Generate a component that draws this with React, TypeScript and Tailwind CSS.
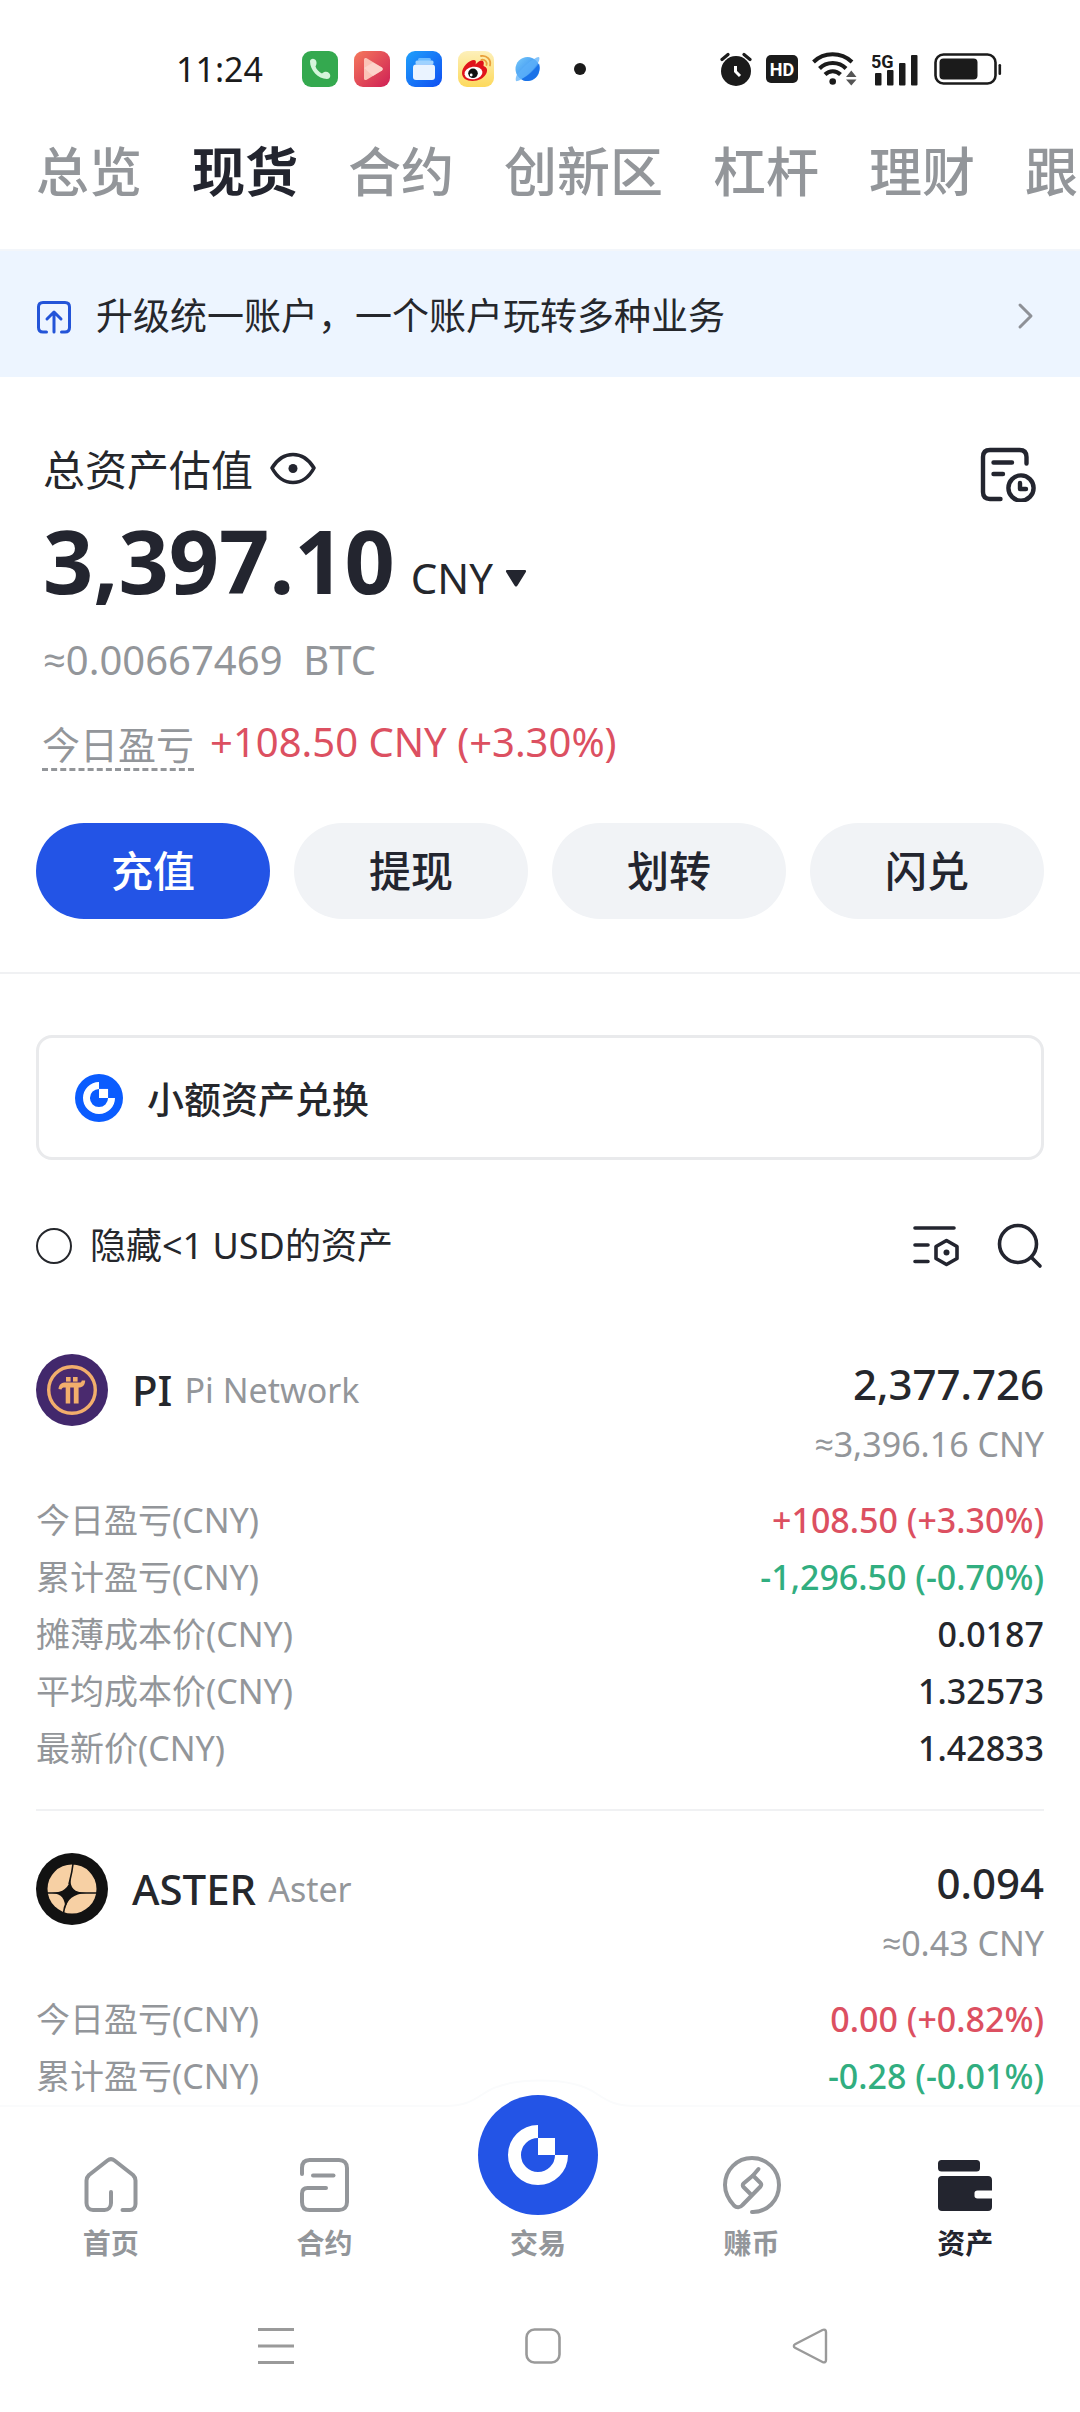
import { useState } from "react";
import type { ReactNode } from "react";
import clsx from "clsx";

const tabs = ["总览", "现货", "合约", "创新区", "杠杆", "理财", "跟单"];
const actions = ["充值", "提现", "划转", "闪兑"];

type Tone = "up" | "down" | "plain";
type Row = { label: string; value: string; tone: Tone };
type Asset = {
  symbol: string;
  name: string;
  amount: string;
  approx: string;
  icon: ReactNode;
  rows: Row[];
};

const toneClass: Record<Tone, string> = {
  up: "text-[#dc5061]",
  down: "text-[#31ae80]",
  plain: "text-[#25272c]",
};

const assets: Asset[] = [
  {
    symbol: "PI",
    name: "Pi Network",
    amount: "2,377.726",
    approx: "≈3,396.16 CNY",
    icon: <PiCoin />,
    rows: [
      { label: "今日盈亏(CNY)", value: "+108.50 (+3.30%)", tone: "up" },
      { label: "累计盈亏(CNY)", value: "-1,296.50 (-0.70%)", tone: "down" },
      { label: "摊薄成本价(CNY)", value: "0.0187", tone: "plain" },
      { label: "平均成本价(CNY)", value: "1.32573", tone: "plain" },
      { label: "最新价(CNY)", value: "1.42833", tone: "plain" },
    ],
  },
  {
    symbol: "ASTER",
    name: "Aster",
    amount: "0.094",
    approx: "≈0.43 CNY",
    icon: <AsterCoin />,
    rows: [
      { label: "今日盈亏(CNY)", value: "0.00 (+0.82%)", tone: "up" },
      { label: "累计盈亏(CNY)", value: "-0.28 (-0.01%)", tone: "down" },
    ],
  },
];

/* ---------- logos ---------- */

function GateMark({ className, viewBox, fill }: { className: string; viewBox: string; fill: string }) {
  return (
    <svg className={className} viewBox={viewBox} aria-hidden="true">
      <circle cx="60" cy="60" r="60" fill={fill} />
      <path d="M60 36.5A23.5 23.5 0 1 0 83.5 60" fill="none" stroke="#fff" strokeWidth="13" />
      <rect x="60" y="43" width="17" height="17" fill="#fff" />
    </svg>
  );
}

function PiCoin() {
  return (
    <svg className="size-[72px] shrink-0" viewBox="0 0 72 72" aria-hidden="true">
      <circle cx="36" cy="36" r="36" fill="#42286c" />
      <circle cx="36" cy="36" r="23.3" fill="#4a2a6e" stroke="#f2ae6c" strokeWidth="3.4" />
      <g fill="#f2ae6c">
        <rect x="30" y="23" width="4.6" height="4.6" />
        <rect x="37" y="23" width="4.6" height="4.6" />
        <path d="M22.5 35c.6-4.600 3-6.400 7.500-6.400h13.200c1.600 0 2.300-.7 2.600-2.200h3.400c-.2 4.600-2.300 7-6.600 7v16h-4.800v-16h-3.600v16h-4.500v-16h-1.300c-1.700 0-2.500.6-2.900 2z" />
      </g>
    </svg>
  );
}

function AsterCoin() {
  return (
    <svg className="size-[72px] shrink-0" viewBox="0 0 72 72" aria-hidden="true">
      <circle cx="36" cy="36" r="36" fill="#121212" />
      <circle cx="36" cy="36" r="24.5" fill="#f7d0a4" />
      <g fill="none" stroke="#121212" strokeWidth="1.6">
        <path d="M11 40H61" />
        <path d="M37 11C36 20 34.500 25 33 31" />
        <path d="M31 48C28.500 53 27.800 56 27.500 60" />
      </g>
      <path d="M34.500 25C34 35 38 39.500 50 40C38 40.500 30.500 47 29.500 56C29 46 26 40.800 16 40C27 39.500 33 35 34.500 25Z" fill="#121212" />
    </svg>
  );
}

/* ---------- status bar ---------- */

function StatusBar() {
  return (
    <div className="flex h-[134px] shrink-0 items-center justify-between pt-1 pr-[78px] pl-[176px]">
      <div className="flex items-center">
        <span className="w-[126px] text-[34px] leading-[48px] text-[#1b1b1b]">11:24</span>
        <div className="flex items-center gap-4">
          <svg className="size-9" viewBox="0 0 36 36" aria-hidden="true">
            <rect width="36" height="36" rx="9" fill="#34a94f" />
            <path d="M8 10.500C8 8 11 7 13 8.500C15.500 10.500 14.500 14 13.500 15.500C14.500 18.500 17 21 20 22.500C22 20.500 25 20 27 22C29.500 24.500 28 28 25 28C16 28 8 19 8 10.500Z" fill="#d4f5db" />
          </svg>
          <svg className="size-9" viewBox="0 0 36 36" aria-hidden="true">
            <defs>
              <linearGradient id="video" x1="0" y1="0" x2="1" y2="1">
                <stop offset="0" stopColor="#f5795c" />
                <stop offset="1" stopColor="#cf1f55" />
              </linearGradient>
            </defs>
            <rect width="36" height="36" rx="9" fill="url(#video)" />
            <path d="M10 8.500C10 7 11.500 6.500 12.700 7.200L28 16.500C29 17.200 29 18.700 28 19.400L12.700 28.800C11.500 29.500 10 29 10 27.500Z" fill="#fbc3b7" />
            <path d="M10 17L19 11.500L28 16.500C29 17.200 29 18.700 28 19.400L19 25Z" fill="#fde0d8" opacity=".6" />
          </svg>
          <svg className="size-9" viewBox="0 0 36 36" aria-hidden="true">
            <defs>
              <linearGradient id="files" x1="0" y1="0" x2="1" y2="1">
                <stop offset="0" stopColor="#1fa0fb" />
                <stop offset="1" stopColor="#0f4ef2" />
              </linearGradient>
            </defs>
            <rect width="36" height="36" rx="9" fill="url(#files)" />
            <rect x="12" y="7" width="13" height="3" rx="1.500" fill="#6dbcff" />
            <rect x="9.500" y="9.500" width="18" height="4" rx="1.500" fill="#9fd2ff" />
            <rect x="7" y="13.500" width="22" height="15.500" rx="3" fill="#eaf3ff" />
          </svg>
          <svg className="size-9" viewBox="0 0 36 36" aria-hidden="true">
            <defs>
              <linearGradient id="weibo" x1="0" y1="0" x2="0" y2="1">
                <stop offset="0" stopColor="#fdf0ba" />
                <stop offset="1" stopColor="#fdd95c" />
              </linearGradient>
            </defs>
            <rect width="36" height="36" rx="9" fill="url(#weibo)" />
            <path d="M4 22C4 16 11 9 16 9C18.500 9 18 12 17.500 13.500C20 10.500 23 8.500 25 10C26.500 11.500 25.500 13.500 25.500 15C28.500 16 30 18.500 28.500 22C26.500 27 20.500 30 14.500 30C8.500 30 4 27 4 22Z" fill="#e0131b" />
            <ellipse cx="15.500" cy="22" rx="9" ry="6.300" fill="#fff" transform="rotate(-8 15.500 22)" />
            <circle cx="15" cy="22.300" r="4.800" fill="#111" />
            <circle cx="13.200" cy="24" r="1.400" fill="#fff" />
            <path d="M23 5C28.500 3.800 33.500 9 32 14.500M23.500 8.800C27 8.200 29.500 11 28.500 14" fill="none" stroke="#e9a03c" strokeWidth="1.800" strokeLinecap="round" />
          </svg>
          <svg className="size-9" viewBox="0 0 36 36" aria-hidden="true">
            <defs>
              <linearGradient id="planet" x1="0" y1="0" x2="1" y2="1">
                <stop offset="0" stopColor="#79cbfb" />
                <stop offset="1" stopColor="#1773ea" />
              </linearGradient>
            </defs>
            <circle cx="17.500" cy="18" r="12" fill="url(#planet)" />
            <path d="M6 30C5 26.500 7 23 10 20C16 13 24 7 28.500 6C30 6 29.500 9 28.500 11C25 18 16 26 11 28.500C8.500 29.800 6.500 30.500 6 30Z" fill="#5db2fa" opacity=".75" />
            <path d="M29 12.500C31 18 28.500 28 18 30C14.500 30 12.500 29 11.500 28.200C18 25 25 18.500 29 12.500Z" fill="#1a72e8" />
          </svg>
        </div>
        <span className="ml-7 size-3 rounded-full bg-[#1b1b1b]" />
      </div>

      <div className="flex items-center gap-3.5 text-[#1b1b1b]">
        <svg className="h-9 w-8" viewBox="0 0 32 36" aria-hidden="true">
          <circle cx="16" cy="20" r="15" fill="currentColor" />
          <path d="M2 8.500L8 3.500M30 8.500L24 3.500" stroke="currentColor" strokeWidth="3.200" strokeLinecap="round" />
          <path d="M15.500 15V20.500L20 25" fill="none" stroke="#fff" strokeWidth="3" />
        </svg>
        <svg className="h-7 w-8" viewBox="0 0 32 28" aria-label="HD">
          <rect width="32" height="28" rx="5" fill="currentColor" />
          <text x="16" y="21" textAnchor="middle" fontFamily="Roboto, sans-serif" fontSize="18" fontWeight="700" fill="#fff">HD</text>
        </svg>
        <svg className="h-9 w-[46px]" viewBox="0 0 46 36" aria-hidden="true">
          <g fill="none" stroke="currentColor" strokeWidth="4">
            <path d="M1.500 11C12 .8 29 .8 40 11" />
            <path d="M7.500 17.500C14.500 10.300 27 10.300 34 17.500" />
            <path d="M13 23.500C17.500 19 24 19 28.500 23.500" />
          </g>
          <circle cx="20.700" cy="30.500" r="3.300" fill="currentColor" />
          <path d="M34 26L39.300 19.500L44.500 26ZM34 28.500H44.500L39.300 34.500Z" fill="#555" />
        </svg>
        <svg className="h-9 w-12" viewBox="0 0 48 36" aria-label="5G">
          <text x="-1" y="16.500" fontFamily="Roboto, sans-serif" fontSize="18" fontWeight="700" fill="currentColor">5G</text>
          <g fill="currentColor">
            <rect x="3" y="22" width="6.500" height="12.500" rx="1" />
            <rect x="15" y="19" width="6.500" height="15.500" rx="1" />
            <rect x="27" y="12" width="6.500" height="22.500" rx="1" />
            <rect x="39" y="4" width="6.500" height="30.500" rx="1" />
          </g>
        </svg>
        <svg className="h-8 w-[68px]" viewBox="0 0 68 32" aria-hidden="true">
          <rect x="1.500" y="1.500" width="60" height="29" rx="8" fill="none" stroke="currentColor" strokeWidth="2.600" />
          <rect x="5.500" y="5.500" width="38" height="21" rx="4" fill="currentColor" />
          <rect x="64.500" y="11" width="2.600" height="11" rx="1.300" fill="currentColor" />
        </svg>
      </div>
    </div>
  );
}

function AssetCard({ asset }: { asset: Asset }) {
  return (
    <article className="border-b-2 border-[#f0f1f3] pt-[42px] pb-8 last:border-b-0">
      <div className="flex items-start justify-between">
        <div className="flex items-center">
          {asset.icon}
          <h3 className="ml-6 text-[42px] leading-[60px] font-medium">{asset.symbol}</h3>
          <span className="ml-3 text-[34px] leading-[60px] text-[#93969a]">{asset.name}</span>
        </div>
        <div className="text-right">
          <p className="text-[42px] leading-[60px] font-medium">{asset.amount}</p>
          <p className="text-[34px] leading-[60px] text-[#93969a]">{asset.approx}</p>
        </div>
      </div>
      <dl className="mt-[18px] text-[34px] leading-[57px]">
        {asset.rows.map((r) => (
          <div key={r.label} className="flex justify-between">
            <dt className="text-[#93969a]">{r.label}</dt>
            <dd className={clsx("font-medium", toneClass[r.tone])}>{r.value}</dd>
          </div>
        ))}
      </dl>
    </article>
  );
}

/* ---------- bottom bar ---------- */

const navItems = [
  {
    label: "首页",
    icon: (
      <svg className="size-[60px]" viewBox="0 0 60 60" fill="none" stroke="currentColor" strokeWidth="4" strokeLinecap="round" strokeLinejoin="round" aria-hidden="true">
        <path d="M30 37V48C30 52 27.500 55 23.500 55H12C8 55 5.500 52 5.500 48V25.500C5.500 23 6.500 21.500 8 20L26.500 5.500C29 3.500 31 3.500 33.500 5.500L52 20C53.500 21.500 54.500 23 54.500 25.500V49C54.500 52.500 52 55 48.500 55H41.500" />
      </svg>
    ),
  },
  {
    label: "合约",
    icon: (
      <svg className="size-[60px]" viewBox="0 0 60 60" fill="none" stroke="currentColor" strokeWidth="4" strokeLinecap="round" strokeLinejoin="round" aria-hidden="true">
        <path d="M8 19V13C8 8 10.500 5 15.500 5H45C50 5 53 8 53 13V47C53 52 50 55 45 55H15.500C10.500 55 8 52 8 47V38.500C8 35 9.500 33 13.500 33H32" />
        <path d="M19 20.500H39.500" />
      </svg>
    ),
  },
  { label: "交易", icon: null },
  {
    label: "赚币",
    icon: (
      <svg className="size-[60px]" viewBox="0 0 60 60" fill="none" stroke="currentColor" strokeWidth="4" strokeLinecap="round" strokeLinejoin="round" aria-hidden="true">
        <path d="M30 57C45 57.500 57 45.500 57 30C57 15 45 3 30 3C15 3 3 15 3 30C3 38 6.500 44.500 12 50.500C14.500 53 18 53 20.500 50L38.500 31.500C39.500 30 39.500 29 38.500 28L31 20.500L21.500 28.500C20.500 29.500 20.500 31 21.500 32L29.500 40" />
        <path d="M31 20.500L36.500 14" />
      </svg>
    ),
  },
  {
    label: "资产",
    active: true,
    icon: (
      <svg className="size-[60px]" viewBox="0 0 60 60" fill="currentColor" aria-hidden="true">
        <rect x="3" y="5" width="42" height="11.500" rx="3.500" />
        <path d="M7 21H53C55.500 21 57 22.500 57 25V35.500H42.500C40.500 35.500 39.500 36.500 39.500 38V41C39.500 42.500 40.500 43.500 42.500 43.500H57V52C57 54.500 55.500 56 53 56H7C4.500 56 3 54.500 3 52V25C3 22.500 4.500 21 7 21Z" />
      </svg>
    ),
  },
];

function BottomNav() {
  return (
    <nav className="relative grid shrink-0 grid-cols-5 border-t-2 border-[#fafbfc] bg-white pt-12 pr-2 pl-1">
      <svg className="absolute -top-7 left-1/2 h-[34px] w-[190px] -translate-x-1/2" viewBox="0 0 190 34" aria-hidden="true">
        <path d="M0 27C18 27 26 23 38 15C52 5 70 1.500 95 1.500C120 1.500 138 5 152 15C164 23 172 27 190 27V34H0Z" fill="#fff" />
        <path d="M0 27C18 27 26 23 38 15C52 5 70 1.500 95 1.500C120 1.500 138 5 152 15C164 23 172 27 190 27" fill="none" stroke="#fafbfc" strokeWidth="2" />
      </svg>
      {navItems.map((item) => (
        <a
          key={item.label}
          href="#"
          className={clsx("relative flex flex-col items-center", item.active ? "text-[#23252f]" : "text-[#93969a]")}
        >
          {item.icon ?? (
            <>
              <span className="size-[60px]" />
              <GateMark className="absolute -top-[60px] size-[120px]" viewBox="0 0 120 120" fill="#2354e6" />
            </>
          )}
          <span className="mt-2 text-[28px] leading-10 font-bold">{item.label}</span>
        </a>
      ))}
    </nav>
  );
}

export default function App() {
  const [tab, setTab] = useState("现货");
  const [hideSmall, setHideSmall] = useState(false);

  return (
    <div className="flex h-screen flex-col overflow-hidden bg-white font-['Noto_Sans','Open_Sans','Noto_Sans_CJK_SC',sans-serif] text-[#25272c]">
      <StatusBar />

      <div className="flex shrink-0 gap-[50px] overflow-hidden border-b-2 border-[#f3f6fa] px-9 pb-[39px]">
        {tabs.map((t) => (
          <button
            key={t}
            onClick={() => setTab(t)}
            className={clsx(
              "shrink-0 text-[53px] leading-[76px] whitespace-nowrap",
              t === tab ? "font-bold text-[#23252f]" : "font-medium text-[#93969a]"
            )}
          >
            {t}
          </button>
        ))}
      </div>

      <main className="min-h-0 flex-1 overflow-hidden">
        {/* Upgrade banner */}
        <a href="#" className="flex h-[126px] items-center bg-[#edf5ff] px-9 pt-1">
          <svg className="size-9" viewBox="0 0 36 36" fill="none" stroke="#2354d8" strokeWidth="3" strokeLinecap="round" strokeLinejoin="round" aria-hidden="true">
            <path d="M10.500 34H7C4 34 2.500 32.500 2.500 29.500V9C2.500 6 4 4.500 7 4.500H29C32 4.500 33.500 6 33.500 9V29.500C33.500 32.500 32 34 29 34H25.500" />
            <path d="M18 34V14.500M11 21L18 14L25 21" />
          </svg>
          <span className="ml-6 text-[37px] leading-[52px]">升级统一账户，一个账户玩转多种业务</span>
          <svg className="ml-auto size-9" viewBox="0 0 36 36" fill="none" stroke="#8e9197" strokeWidth="3" strokeLinecap="round" strokeLinejoin="round" aria-hidden="true">
            <path d="M12 7L23 18L12 29" />
          </svg>
        </a>

        {/* Balance */}
        <section className="border-b-2 border-[#f0f1f3] px-9 pt-[65px] pb-[53px]">
          <div className="flex items-start justify-between pl-[7px]">
            <div className="flex items-center gap-4">
              <h1 className="text-[42px] leading-[56px]">总资产估值</h1>
              <button aria-label="显示或隐藏金额">
                <svg className="h-9 w-12" viewBox="0 0 48 36" fill="none" aria-hidden="true">
                  <path d="M3 16C9 6 16 2.500 24 2.500C32 2.500 39 6 45 16C39 27 32 30.500 24 30.500C16 30.500 9 27 3 16Z" stroke="#23252f" strokeWidth="3.600" strokeLinejoin="round" />
                  <circle cx="24" cy="16.500" r="4.500" fill="#23252f" />
                </svg>
              </button>
            </div>
            <button aria-label="账单记录">
              <svg className="mt-1 mr-2 size-[56px]" viewBox="0 0 56 56" fill="none" stroke="#23252f" strokeWidth="4.400" strokeLinecap="round" strokeLinejoin="round" aria-hidden="true">
                <path d="M20.500 53H10C5.500 53 3 50.500 3 46V11C3 6.500 5.500 4 10 4H39.500C44 4 46.500 6.500 46.500 11V17.500" />
                <path d="M13.500 16.500H32M13.500 28H23" />
                <circle cx="41" cy="42" r="12.600" />
                <path d="M40 37V43H46" />
              </svg>
            </button>
          </div>
          <div className="mt-2.5 flex items-baseline pl-[7px]">
            <span className="text-[88px] leading-[96px] font-bold text-[#23252f]">3,397.10</span>
            <button className="ml-4 flex items-center gap-3 text-[42px] leading-[56px]">
              CNY
              <svg className="size-[22px]" viewBox="0 0 22 22" aria-hidden="true">
                <path d="M2.500 3H19.500C21 3 21.500 4 20.700 5.200L12.500 18.500C11.500 20 10.500 20 9.500 18.500L1.300 5.200C.5 4 1 3 2.500 3Z" fill="#23252f" />
              </svg>
            </button>
          </div>
          <p className="mt-6 pl-[7px] text-[40px] leading-[56px] whitespace-pre text-[#93969a]">{"≈0.00667469  BTC"}</p>
          <div className="mt-7 flex items-start gap-4 pl-1.5">
            <span className="border-b-[3px] border-dashed border-[#93969a] pt-1 text-[38px] leading-[48px] text-[#93969a]">今日盈亏</span>
            <span className="text-[40px] leading-[52px] text-[#dc5061]">+108.50 CNY (+3.30%)</span>
          </div>
          <div className="mt-[52px] grid grid-cols-4 gap-6">
            {actions.map((a, i) => (
              <button
                key={a}
                className={clsx(
                  "h-24 rounded-full text-[42px] leading-[56px] font-medium",
                  i === 0 ? "bg-[#2354e6] text-white" : "bg-[#f1f3f6] text-[#23252f]"
                )}
              >
                {a}
              </button>
            ))}
          </div>
        </section>

        <section className="px-9 pt-[61px]">
          <button className="flex h-[125px] w-full items-center rounded-2xl border-[3px] border-[#e9eaec] px-9">
            <GateMark className="size-12 rounded-full" viewBox="15 15 90 90" fill="#0a5cff" />
            <span className="ml-6 pt-1 text-[37px] leading-[52px] font-medium">小额资产兑换</span>
          </button>

          <div className="mt-[60px] flex items-center justify-between">
            <label className="flex items-center gap-[18px] text-[36px] leading-[52px]">
              <input
                type="checkbox"
                checked={hideSmall}
                onChange={(e) => setHideSmall(e.target.checked)}
                className="size-9 appearance-none rounded-full border-2 border-[#25272c] checked:bg-[#2354e6]"
              />
              隐藏&lt;1 USD的资产
            </label>
            <div className="flex items-center gap-9">
              <button aria-label="筛选设置">
                <svg className="size-12" viewBox="0 0 48 48" fill="none" stroke="#23252f" strokeWidth="3.600" strokeLinecap="round" strokeLinejoin="round" aria-hidden="true">
                  <path d="M3 6H42M3 23H16M3 39.500H16" />
                  <path d="M34.500 18.500L45 24.500V36.500L34.500 42.500L24 36.500V24.500Z" />
                  <circle cx="34.500" cy="30.500" r="3" fill="#23252f" stroke="none" />
                </svg>
              </button>
              <button aria-label="搜索">
                <svg className="size-12" viewBox="0 0 48 48" fill="none" stroke="#23252f" strokeWidth="3.600" strokeLinecap="round" aria-hidden="true">
                  <circle cx="22" cy="22" r="18.500" />
                  <path d="M35.500 35.500L44 44" />
                </svg>
              </button>
            </div>
          </div>

          <div className="mt-10">
            {assets.map((a) => (
              <AssetCard key={a.symbol} asset={a} />
            ))}
          </div>
        </section>
      </main>

      <BottomNav />

      {/* System navigation keys */}
      <div className="flex shrink-0 items-center justify-between pt-[65px] pr-[252px] pb-12 pl-[258px] text-[#9a9a9a]">
        <button aria-label="最近任务">
          <svg className="size-9" viewBox="0 0 36 36" stroke="currentColor" strokeWidth="3" aria-hidden="true">
            <path d="M0 1.500H36M0 18H36M0 34.500H36" />
          </svg>
        </button>
        <button aria-label="主屏幕">
          <svg className="size-9" viewBox="0 0 36 36" fill="none" stroke="currentColor" strokeWidth="2.600" aria-hidden="true">
            <rect x="1.500" y="1.500" width="33" height="33" rx="8" />
          </svg>
        </button>
        <button aria-label="返回">
          <svg className="size-9" viewBox="0 0 36 36" fill="none" stroke="currentColor" strokeWidth="2.400" strokeLinejoin="round" aria-hidden="true">
            <path d="M34 4V32C34 34 32.500 35 30.500 34L3 19.800C1.500 19 1.500 17 3 16.200L30.500 2C32.500 1 34 2 34 4Z" />
          </svg>
        </button>
      </div>
    </div>
  );
}
